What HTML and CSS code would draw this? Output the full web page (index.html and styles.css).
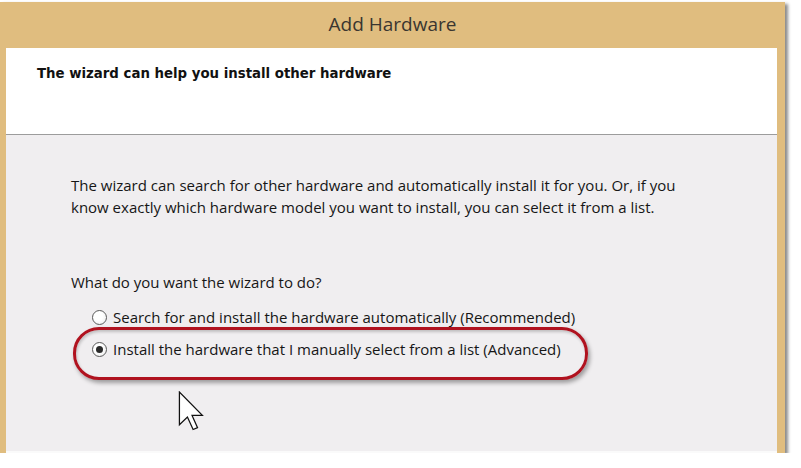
FILE: index.html
```html
<!DOCTYPE html>
<html lang="en">
<head>
  <meta charset="UTF-8" />
  <meta name="viewport" content="width=device-width, initial-scale=1.0" />
  <title>Add Hardware</title>
  <link rel="stylesheet" href="styles.css">
</head>
<body>
  <div class="window">
    <div class="titlebar">Add Hardware</div>

    <div class="frame">
      <div class="header">
        <h1>The wizard can help you install other hardware</h1>
      </div>

      <div class="content">
        <p class="intro">The wizard can search for other hardware and automatically install it for you. Or, if you know exactly which hardware model you want to install, you can select it from a list.</p>

        <p class="question">What do you want the wizard to do?</p>

        <div class="options">
          <label class="option"><span class="radio"></span> Search for and install the hardware automatically (Recommended)</label>
          <label class="option selected"><span class="radio checked"></span> Install the hardware that I manually select from a list (Advanced)</label>
        </div>

        <!-- mouse pointer from the screenshot -->
        <svg class="pointer" width="26" height="40" viewBox="0 0 12 19">
          <polygon points="0.5,0.5 0.5,16 4.3,12.4 7,18.3 9.1,17.4 6.5,11.6 11.4,11.6" fill="#fff" stroke="#111" stroke-width="0.6" stroke-linejoin="miter" />
        </svg>
      </div>
    </div>
  </div>
</body>
</html>
```

FILE: styles.css
```css
body {
  margin: 0;
  padding: 0;
  background: #fff;
  font-family: 'Open Sans', 'Noto Sans', sans-serif;
  color: #161616;
}

.window {
  width: 785px;
  height: 451px;
  margin-top: 2px;
  display: flex;
  flex-direction: column;
  background: #e0bd7f;
  box-shadow: 3px 2px 3px rgba(0, 0, 0, 0.45);
}

.titlebar {
  height: 46px;
  line-height: 44px;
  text-align: center;
  font-size: 19px;
  color: #3a3630;
}

.frame {
  flex: 1;
  display: flex;
  flex-direction: column;
  margin: 0 8px 0 6px;
}

.header {
  height: 86px;
  background: #fff;
  border-bottom: 1px solid #9c9c9c;
  padding-left: 31px;
}

h1 {
  margin: 0;
  padding-top: 16px;
  font-family: 'DejaVu Sans Condensed', 'DejaVu Sans', sans-serif;
  font-size: 14.8px;
  font-weight: bold;
  color: #111;
}

.content {
  flex: 1;
  position: relative;
  background: #f0eef0;
  border-bottom: 2px solid #fafafa;
  padding: 39px 0 0 65px;
  font-size: 15px;
  line-height: 22px;
}

.intro {
  margin: 0;
  width: 640px;
}

.question {
  margin: 53px 0 8px;
}

.options {
  margin-left: 21px;
}

.option {
  position: relative;
  display: flex;
  align-items: center;
  gap: 6px;
  height: 32px;
}

.option.selected::before {
  content: "";
  position: absolute;
  left: -19px;
  top: -6px;
  width: 509px;
  height: 47px;
  border: 3px solid #b0121f;
  border-radius: 26px;
  box-shadow: 2px 3px 4px rgba(0, 0, 0, 0.35), inset 1px 2px 3px rgba(0, 0, 0, 0.2);
}

.radio {
  width: 13px;
  height: 13px;
  border: 1px solid #5a5a5a;
  border-radius: 50%;
  background: radial-gradient(circle at 40% 40%, #fff 40%, #e6e6e6);
  display: flex;
  align-items: center;
  justify-content: center;
}

.radio.checked::after {
  content: "";
  width: 7px;
  height: 7px;
  border-radius: 50%;
  background: #2a2a2a;
}

.pointer {
  position: absolute;
  left: 172px;
  top: 256px;
}
```
